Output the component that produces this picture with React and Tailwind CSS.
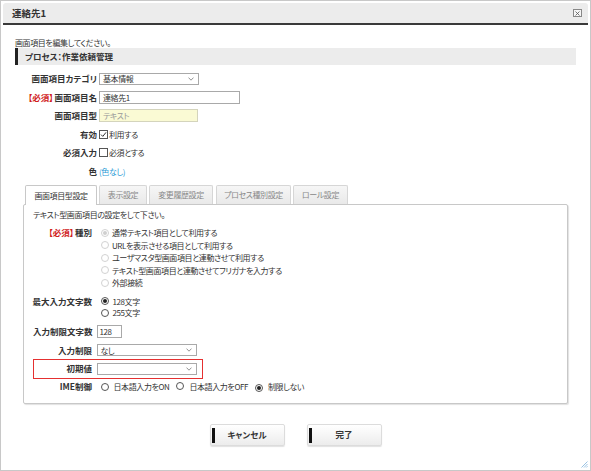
import React from "react";

const Radio = ({ checked, disabled }) => (
  <span
    className={`inline-flex items-center justify-center w-[8px] h-[8px] rounded-full border bg-white shrink-0 ${
      disabled ? "border-[#d2d2d2]" : "border-[#555]"
    }`}
  >
    {checked && (
      <span className={`w-[4px] h-[4px] rounded-full ${disabled ? "bg-[#cfcfcf]" : "bg-[#222]"}`} />
    )}
  </span>
);

const Checkbox = ({ checked }) => (
  <span className="inline-flex items-center justify-center w-[9px] h-[9px] border border-[#555] bg-white shrink-0">
    {checked && (
      <svg width="7" height="7" viewBox="0 0 7 7">
        <path d="M1 3.6 L2.8 5.4 L6 1.4" fill="none" stroke="#333" strokeWidth="1" />
      </svg>
    )}
  </span>
);

const Select = ({ value, className }) => (
  <div
    className={`flex items-center justify-between h-[12px] border border-[#a9a9a9] bg-white pl-[3px] pr-[4px] ${className}`}
  >
    <span>{value}</span>
    <svg width="6" height="4" viewBox="0 0 6 4">
      <path d="M0.5 0.6 L3 3.2 L5.5 0.6" fill="none" stroke="#777" strokeWidth="0.8" />
    </svg>
  </div>
);

const Required = () => <span className="text-[#d0201a] mr-[1px]">【必須】</span>;

// bold label text is a touch larger than body copy in the original
const lbl = "text-[8.5px] tracking-normal font-bold whitespace-nowrap";

const FormRow = ({ label, children }) => (
  <div className="flex items-center h-[18.5px]">
    <div className={`w-[82px] text-right ${lbl}`}>{label}</div>
    <div className="ml-[2px] flex items-center">{children}</div>
  </div>
);

const tabs = [
  { name: "画面項目型設定", w: "w-[72px]", active: true },
  { name: "表示設定", w: "w-[48px]" },
  { name: "変更履歴設定", w: "w-[64px]" },
  { name: "プロセス種別設定", w: "w-[75px] ml-[1px]" },
  { name: "ロール設定", w: "w-[55px]" },
];

const kinds = [
  "通常テキスト項目として利用する",
  "URLを表示させる項目として利用する",
  "ユーザマスタ型画面項目と連動させて利用する",
  "テキスト型画面項目と連動させてフリガナを入力する",
  "外部接続",
];

const Button = ({ children }) => (
  <button className="relative w-[75px] h-[22px] bg-gradient-to-b from-white to-[#ececec] border border-[#dcdcdc] rounded-[2px] shadow-[0_1px_1px_rgba(0,0,0,0.12)] text-[8.5px] tracking-normal font-bold flex items-center justify-center">
    <span className="absolute left-[1px] top-[3px] w-[3px] h-[15px] bg-[#111]" />
    {children}
  </button>
);

export default function App() {
  return (
    <div className="relative w-[591px] h-[471px] bg-white border border-[#c8c8c8] p-[2px] font-['Noto_Sans_CJK_JP',sans-serif] text-[8px] tracking-[-0.4px] leading-[11px] text-[#333] [font-feature-settings:'palt'] overflow-hidden">
      {/* Title bar */}
      <div className="h-[22px] bg-[#ececec] rounded-t-[3px] border-b-2 border-[#3a3a3a] flex items-center justify-between pl-[9px] pr-[6px]">
        <span className="font-bold text-[9.5px] tracking-normal">連絡先1</span>
        <span className="flex items-center justify-center w-[9px] h-[8px] border border-[#888] bg-[#f6f6f6]">
          <svg width="5" height="5" viewBox="0 0 5 5">
            <path d="M0.5 0.5 L4.5 4.5 M4.5 0.5 L0.5 4.5" stroke="#555" strokeWidth="0.8" />
          </svg>
        </span>
      </div>

      <div className="px-[12px]">
        <div className="mt-[11.5px]">画面項目を編集してください。</div>
        <div className={`h-[17px] bg-[#ececec] border-l-[3px] border-[#222] pl-[7px] flex items-center ${lbl}`}>
          プロセス：作業依頼管理
        </div>

        <div className="mt-[5px]">
          <FormRow label="画面項目カテゴリ">
            <Select value="基本情報" className="w-[100px] h-[12.5px]" />
          </FormRow>
          <FormRow
            label={
              <>
                <Required />
                画面項目名
              </>
            }
          >
            <div className="w-[141px] h-[13px] border border-[#a9a9a9] pl-[3px] flex items-center">連絡先1</div>
          </FormRow>
          <FormRow label="画面項目型">
            <div className="w-[99px] h-[13px] border border-[#d4d4bc] bg-[#fafad4] pl-[3px] flex items-center text-[#999]">
              テキスト
            </div>
          </FormRow>
          <FormRow label="有効">
            <span className="flex items-center gap-[1px]">
              <Checkbox checked />
              利用する
            </span>
          </FormRow>
          <FormRow label="必須入力">
            <span className="flex items-center gap-[1px]">
              <Checkbox />
              必須とする
            </span>
          </FormRow>
          <FormRow label="色">
            <span className="text-[#2a9ad6]">(色なし)</span>
          </FormRow>
        </div>

        {/* Tabs */}
        <div className="mt-[4px] ml-[10px] flex items-end gap-[2px]">
          {tabs.map((t) =>
            t.active ? (
              <div
                key={t.name}
                className={`${t.w} h-[20px] -mb-px relative z-10 bg-white border border-b-0 border-[#c8c8c8] rounded-t-[2px] flex items-center justify-center`}
              >
                {t.name}
              </div>
            ) : (
              <div
                key={t.name}
                className={`${t.w} h-[19px] bg-gradient-to-b from-[#f6f6f6] to-[#e9e9e9] border border-b-0 border-[#d6d6d6] rounded-t-[2px] flex items-center justify-center text-[#888]`}
              >
                {t.name}
              </div>
            )
          )}
        </div>

        {/* Panel */}
        <div className="ml-[8px] w-[545px] h-[200px] bg-white border border-[#c8c8c8] rounded-[2px] shadow-[1px_1px_1px_rgba(0,0,0,0.12)] pl-[9px] pt-[4.5px]">
          <div>テキスト型画面項目の設定をして下さい。</div>

          <div className="flex mt-[6.5px]">
            <div className={`w-[59px] h-[12.5px] flex items-center justify-end ${lbl}`}>
              <Required />
              種別
            </div>
            <div className="ml-[4.5px] flex flex-col">
              {kinds.map((k, i) => (
                <div key={k} className="flex items-center h-[12.5px] pl-[4.5px] gap-[3px]">
                  <Radio disabled checked={i === 0} />
                  <span>{k}</span>
                </div>
              ))}
            </div>
          </div>

          <div className="flex mt-[6.5px]">
            <div className={`w-[59px] h-[11.5px] flex items-center justify-end ${lbl}`}>最大入力文字数</div>
            <div className="ml-[4.5px] flex flex-col">
              <div className="flex items-center h-[11.5px] pl-[4.5px] gap-[3.5px]">
                <Radio checked />
                <span>128文字</span>
              </div>
              <div className="flex items-center h-[11.5px] pl-[4.5px] gap-[3.5px]">
                <Radio />
                <span>255文字</span>
              </div>
            </div>
          </div>

          <div className="flex items-center mt-[6px] h-[13px]">
            <div className={`w-[59px] text-right ${lbl}`}>入力制限文字数</div>
            <div className="ml-[4.5px] w-[25.5px] h-[13px] border border-[#a9a9a9] pl-[2px] flex items-center">128</div>
          </div>

          <div className="flex items-center mt-[6.5px] h-[12px]">
            <div className={`w-[59px] text-right ${lbl}`}>入力制限</div>
            <Select value="なし" className="ml-[4.5px] w-[100px]" />
          </div>

          <div className="relative flex items-center mt-[6.5px] h-[12px]">
            <div className={`w-[59px] text-right ${lbl}`}>初期値</div>
            <Select value="" className="ml-[4.5px] w-[100px]" />
            <div className="absolute left-0 top-[-4px] w-[170px] h-[20px] border-[1.5px] border-[#e53030]" />
          </div>

          <div className="flex items-center mt-[6px] h-[12px]">
            <div className={`w-[59px] text-right ${lbl}`}>IME制御</div>
            <div className="ml-[4.5px] pl-[4px] flex items-center">
              <Radio />
              <span className="ml-[5px]">日本語入力をON</span>
              <span className="ml-[7px]">
                <Radio />
              </span>
              <span className="ml-[5px]">日本語入力をOFF</span>
              <span className="ml-[7px]">
                <Radio checked />
              </span>
              <span className="ml-[5px]">制限しない</span>
            </div>
          </div>
        </div>

        {/* Buttons */}
        <div className="mt-[20px] flex justify-center gap-[22px]">
          <Button>キャンセル</Button>
          <Button>完了</Button>
        </div>
      </div>

      {/* Resize grip */}
      <svg className="absolute right-[2px] bottom-[2px]" width="7" height="7" viewBox="0 0 7 7">
        <path d="M6.5 0.5 L0.5 6.5 M6.5 3 L3 6.5 M6.5 5.2 L5.2 6.5" stroke="#7fb2dc" strokeWidth="0.8" />
      </svg>
    </div>
  );
}
